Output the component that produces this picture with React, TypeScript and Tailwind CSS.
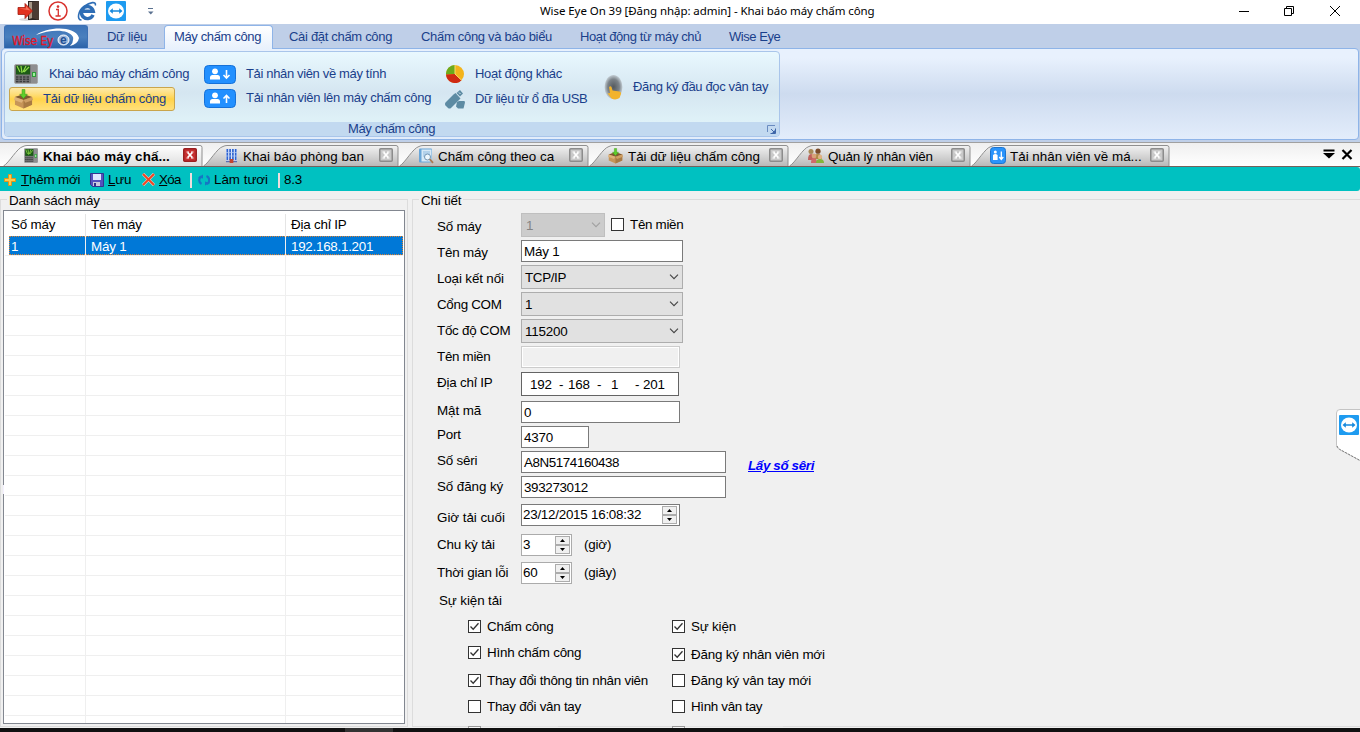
import React from 'react';

type IconProps = { className?: string };

const DoorIcon = () => (
  <svg width="24" height="22" viewBox="0 0 24 22">
    <ellipse cx="9" cy="19.500" rx="7" ry="1.500" fill="#dddddd" />
    <path d="M11 1h11v19H11z" fill="#2a2422" />
    <path d="M12 2h7v15l-7 2z" fill="#a59686" />
    <path d="M15 2l7-1v19l-7-2z" fill="#4a3b33" />
    <path d="M1 7.500h7V3.500l7.500 7.500L8 18.500v-4H1z" fill="#e2311d" stroke="#a51d10" strokeWidth=".8" />
    <path d="M2 8.500h7V6l4.500 4.500z" fill="#f4735c" />
  </svg>
);

const InfoIcon = () => (
  <svg width="20" height="20" viewBox="0 0 20 20">
    <circle cx="10" cy="10" r="9" fill="#fff" stroke="#d8332f" strokeWidth="1.500" />
    <circle cx="10" cy="5.600" r="1.300" fill="#d8332f" />
    <path d="M8 8.500h2.300v6M7.500 15h5.200" fill="none" stroke="#d8332f" strokeWidth="1.300" />
  </svg>
);

const ExplorerIcon = () => (
  <svg width="20" height="20" viewBox="0 0 20 20">
    <path
      d="M16 13.800a6 6 0 1 1 .300-3.500H6"
      fill="none"
      stroke="#2e6db5"
      strokeWidth="3.400"
    />
    <path d="M4.500 19C-.5 19 1 10 7 5.500 13 1 19.500 0 18.300 4.500" fill="none" stroke="#2e6db5" strokeWidth="1.600" />
  </svg>
);

const ViewerIcon = ({ className }: IconProps) => (
  <svg className={className} viewBox="0 0 20 20">
    <rect width="20" height="20" rx="1" fill="#1e9bf0" />
    <ellipse cx="10" cy="10" rx="8" ry="7.500" fill="#fff" />
    <path d="M3.500 10l3.300-2.800v2h6.400v-2l3.300 2.800-3.300 2.800v-2H6.800v2z" fill="#1689dd" />
  </svg>
);

const Logo = () => (
  <div className="relative mt-px ml-1 flex h-[23px] w-[84px] rounded-t-[3px] border border-b-0 border-[#3c70b4] bg-linear-to-b from-[#3d74b8] via-[#4a80be] to-[#2b62a8]">
    <svg className="absolute top-[2px] left-[28px]" width="50" height="19" viewBox="0 0 50 19">
      <path d="M3 7C14-1 42-3 46 10q-1 6-9 8 4-4 3-9C36 1 18 1 3 7z" fill="#fff" />
      <ellipse cx="30.500" cy="12" rx="5.500" ry="5" fill="#9fb9dc" stroke="#fff" strokeWidth="1" />
    </svg>
    <span className="relative mt-[8px] ml-[7px] w-[48px] font-['DejaVu_Sans_Condensed','DejaVu_Sans'] text-[12px] leading-[14px] tracking-[-0.15px] whitespace-pre text-[#e0182a] [-webkit-text-stroke:0.3px_#e0182a]">
      Wise Ey
    </span>
    <span className="relative mt-[7px] text-[12px] leading-[14px] font-bold text-[#1f4f94]">e</span>
  </div>
);

const DeviceIcon = ({ className }: IconProps) => (
  <svg className={className} viewBox="0 0 24 20" preserveAspectRatio="none">
    <rect x=".5" y=".5" width="23" height="19" rx="1.500" fill="#77787a" stroke="#a8a9aa" />
    <rect x="2" y="1.500" width="14" height="9" fill="#1d5a17" />
    <path d="M3 2l3 6M7 2l1 7M12 2l-3 6M15 3l-5 5" stroke="#8edb48" strokeWidth="1.200" />
    <path d="M2 13h13M2 15.300h13M2 17.600h13" stroke="#3c3d3f" strokeWidth="1.500" strokeDasharray="2.500 1" />
    <rect x="17" y="1" width="6" height="18" fill="#8d8e90" />
    <rect x="18" y="8" width="4" height="5" fill="#2f9c3a" />
    <rect x="19" y="9" width="2" height="3" fill="#9cf09a" />
  </svg>
);

const BoxIcon = ({ className }: IconProps) => (
  <svg className={className} viewBox="0 0 20 20">
    <path d="M1 8l9-3 9 3v8l-9 4-9-4z" fill="#c69558" />
    <path d="M10 11l9-3v8l-9 4z" fill="#a87a43" />
    <path d="M1 8l9 3 9-3-9-3z" fill="#7e5a30" />
    <path d="M1 8l9 3-2 3-8-3z" fill="#ddb27a" />
    <path d="M19 8l-9 3 2 3 8-3z" fill="#cf9f63" />
    <path d="M8.500 0h3v5h2.500L10 9.500 6 5h2.500z" fill="#5fd02c" stroke="#3c9c18" strokeWidth=".6" />
  </svg>
);

const PersonArrow = ({ up }: { up?: boolean }) => (
  <svg width="32" height="19" viewBox="0 0 32 19">
    <rect x=".5" y=".5" width="31" height="18" rx="4" fill="#2290ff" stroke="#1671d8" />
    <circle cx="11" cy="6.300" r="2.900" fill="#fff" />
    <path d="M6 14.500v-2q0-2.500 2.500-2.500h5q2.500 0 2.500 2.500v2z" fill="#fff" />
    <path
      d={up ? 'M22.500 14V7M19.500 9.500l3-3 3 3' : 'M22.500 5v7.500M19.500 10l3 3 3-3'}
      fill="none"
      stroke="#fff"
      strokeWidth="1.600"
    />
  </svg>
);

const PieIcon = () => (
  <svg width="18" height="18" viewBox="0 0 18 18">
    <circle cx="9" cy="9" r="9" fill="#f3b41b" />
    <path d="M9 9V0A9 9 0 0 0 0 9.500z" fill="#6bab1c" />
    <path d="M9 9L0 9.500A9 9 0 0 0 15.500 15.200z" fill="#cf2a13" />
    <path d="M9 0v9l6.500 6.200" fill="none" stroke="#f9dc6d" />
  </svg>
);

const UsbIcon = () => (
  <svg width="20" height="19" viewBox="0 0 20 19">
    <g fill="#5d8ba3">
      <path d="M11.500 3l3.500-3 3 3.500L15 6.500z" />
      <path d="M8.500 4.500l2-1.500 5 5.500-9.500 9.500q-1.500 1-3 0l-2.500-2.500q-1-1.500 0-3z" />
      <path d="M12 12l2-1h5.500l.5 1.500-1.500 6H13l-2-2z" />
    </g>
    <path d="M14 2.500l1.500 1.500" stroke="#d8eaf2" />
  </svg>
);

const FingerIcon = () => (
  <svg width="19" height="25" viewBox="0 0 19 25">
    <defs>
      <radialGradient id="finger">
        <stop offset="0" stopColor="#54595e" />
        <stop offset=".65" stopColor="#7c8389" />
        <stop offset="1" stopColor="#c3cdd4" />
      </radialGradient>
    </defs>
    <ellipse cx="9.500" cy="12" rx="9" ry="12" fill="url(#finger)" />
    <path d="M5 12q1.500-1.500 2.500 0l1 3.500 7 1q2 .5 1.500 2.500l-1.500 4q-4 2.500-8 .5L3.500 18.500l2.500-.5z" fill="#f2b32b" />
  </svg>
);

const BuildingIcon = () => (
  <svg width="13" height="14" viewBox="0 0 14 14" preserveAspectRatio="none">
    <rect x="1" width="12" height="13" fill="#dfe9fb" />
    <path d="M2.500 0v11M5.500 0v11M8.500 0v11M11.500 0v11" stroke="#2d62cf" strokeWidth="1.800" />
    <path d="M1 3.500h12M1 7h12" stroke="#b9cdf3" strokeWidth=".7" />
    <path d="M1 12.500h12" stroke="#5a6fae" strokeWidth="1.500" />
    <rect x="5" y="10" width="4" height="4" fill="#c2452f" />
  </svg>
);

const BookIcon = () => (
  <svg width="16" height="16" viewBox="0 0 16 16">
    <rect x="1" y=".5" width="13" height="14" rx="1" fill="#6aa6d8" />
    <rect x="3.500" y="1.500" width="10" height="12" fill="#d8e9f6" />
    <path d="M5 4h7M5 6h7M5 8h4" stroke="#8fbbe0" />
    <circle cx="9.500" cy="9" r="3" fill="#eef7fd" stroke="#7295b3" />
    <path d="M11.700 11.200l3.300 3.600" stroke="#ab7a50" strokeWidth="1.800" />
  </svg>
);

const PeopleIcon = () => (
  <svg width="17" height="15" viewBox="0 0 17 15">
    <circle cx="4" cy="3.500" r="2.500" fill="#a88a58" />
    <circle cx="11" cy="3.200" r="2.600" fill="#7a4c2b" />
    <path d="M1 12q0-6 3-6t4 6z" fill="#c0605c" />
    <path d="M7 11q0-5 4-5t4 5z" fill="#b08945" />
    <circle cx="7" cy="8" r="2.400" fill="#d8a27a" />
    <path d="M4 15q0-5 3-5t3 5z" fill="#cf6a6a" />
    <circle cx="13" cy="9" r="2.200" fill="#e0b284" />
    <path d="M9 15q0-4 4-4t4 4z" fill="#83b53a" />
  </svg>
);

const TransferIcon = () => (
  <svg width="16" height="17" viewBox="0 0 16 17">
    <rect x=".5" y=".5" width="15" height="16" rx="3" fill="#2a94fb" stroke="#1c74cf" />
    <circle cx="5.300" cy="5" r="1.500" fill="#fff" />
    <path d="M3 13V8q2.300-2 4.600 0v5z" fill="#fff" />
    <path d="M11.300 4.500v7M9.300 10l2 2.500 2-2.500" stroke="#fff" strokeWidth="1.300" fill="none" />
  </svg>
);

const Chevron = ({ className }: IconProps) => (
  <svg className={className} width="10" height="6" viewBox="0 0 10 6">
    <path d="M1 .7l4 4 4-4" fill="none" stroke="currentColor" strokeWidth="1.100" />
  </svg>
);

const CloseBox = ({ active }: { active?: boolean }) => (
  <svg width="14" height="14" viewBox="0 0 14 14">
    <rect
      x=".75"
      y=".75"
      width="12.500"
      height="12.500"
      rx="1"
      fill={active ? '#c62f2f' : '#c9c9c9'}
      stroke={active ? '#9b2020' : '#8c8c8c'}
      strokeWidth="1.500"
    />
    <path d="M4.700 4.500l4.600 5M9.300 4.500l-4.600 5" stroke="#fff" strokeWidth="1.800" />
    <path d="M3.500 4h2.500M8 4h2.500M3.500 10h2.500M8 10h2.500" stroke="#fff" />
  </svg>
);

const menus = [
  { text: 'Dữ liệu', box: 'w-[76px] pl-[19px] tracking-[-0.27px]' },
  { text: 'Máy chấm công', box: 'w-[109px] pl-[9px] tracking-[-0.36px]', active: true },
  { text: 'Cài đặt chấm công', box: 'w-[132px] pl-[16px] tracking-[-0.31px]' },
  { text: 'Chấm công và báo biểu', box: 'w-[159px] pl-[16px] tracking-[-0.3px]' },
  { text: 'Hoạt động từ máy chủ', box: 'w-[149px] pl-[16px] tracking-[-0.38px]' },
  { text: 'Wise Eye', box: 'w-[90px] pl-[16px] tracking-[-0.45px]' },
];

const tabs = [
  { text: 'Khai báo máy chấ...', icon: <DeviceIcon className="h-[15px] w-[14px]" />, width: 200, box: 'w-[200px] ml-[3px] pl-[21px]', slot: 'w-[19px]', label: 'font-bold tracking-[0.1px] -mt-[3px]', active: true },
  { text: 'Khai báo phòng ban', icon: <BuildingIcon />, width: 196, box: 'w-[196px] pl-[22px]', slot: 'w-[18px]', label: 'tracking-[0.07px]' },
  { text: 'Chấm công theo ca', icon: <BookIcon />, width: 190, box: 'w-[190px] pl-[19px]', slot: 'w-[20px]', label: 'tracking-[0px]' },
  { text: 'Tải dữ liệu chấm công', icon: <BoxIcon className="h-[16px] w-[15px]" />, width: 200, box: 'w-[200px] pl-[19px]', slot: 'w-[20px]', label: 'tracking-[-0.03px]' },
  { text: 'Quản lý nhân viên', icon: <PeopleIcon />, width: 182, box: 'w-[182px] pl-[18px]', slot: 'w-[21px]', label: 'tracking-[-0.18px]' },
  { text: 'Tải nhân viên về má...', icon: <TransferIcon />, width: 199, box: 'w-[199px] pl-[19px]', slot: 'w-[20px]', label: 'tracking-[0px] -mt-[3px]' },
];

const Tab = ({ tab }: { tab: (typeof tabs)[number] }) => {
  const w = tab.width;
  return (
    <div className={`relative flex h-[21px] shrink-0 items-center ${tab.box}`}>
      <svg className="absolute top-0 left-0" width={w} height="21" viewBox={`0 0 ${w} 21`}>
        <path
          d={`M.5 21C6 18 14 3 20 1.500Q22 .5 24 .5H${w - 3}q2 0 2 2V21`}
          fill={tab.active ? 'url(#tabOn)' : 'url(#tabOff)'}
          stroke="#8f8f8f"
        />
      </svg>
      <span className={`relative flex shrink-0 ${tab.slot}`}>{tab.icon}</span>
      <span className={`relative mt-[3px] grow leading-[16px] whitespace-nowrap ${tab.label}`}>{tab.text}</span>
      <span className="relative mr-[6px] -mt-px">
        <CloseBox active={tab.active} />
      </span>
    </div>
  );
};

const Titlebar = () => (
  <div className="flex h-6 shrink-0 items-start bg-white">
    <div className="flex h-[22px] w-[540px] items-center">
      <span className="ml-[17px] w-[31px]"><DoorIcon /></span>
      <span className="w-[29px]"><InfoIcon /></span>
      <span className="w-[29px]"><ExplorerIcon /></span>
      <span className="w-[42px]"><ViewerIcon className="h-5 w-5" /></span>
      <svg width="6" height="7" viewBox="0 0 6 7">
        <path d="M0 .5h5" stroke="#5a7190" />
        <path d="M0 3.500h5.500L2.800 6.500z" fill="#5a7190" />
      </svg>
    </div>
    <div className="mt-[3px] w-[699px] font-['Noto_Sans'] text-[11.5px] leading-[16px] tracking-[-0.07px] whitespace-nowrap text-black">
      Wise Eye On 39 [Đăng nhập: admin] - Khai báo máy chấm công
    </div>
    <svg className="mt-[5px]" width="104" height="12" viewBox="0 0 104 12">
      <g fill="none" stroke="#000">
        <path d="M0 6.500h10" />
        <path d="M45.500 3.500h7v7h-7zM47.500 3.500v-2h7v7h-2" />
        <path d="M91 1l10 10M101 1L91 11" />
      </g>
    </svg>
  </div>
);

const RibbonItem = ({ icon, slot, text, box }: { icon: React.ReactNode; slot: string; text: string; box: string }) => (
  <div className={`flex items-center whitespace-nowrap ${box}`}>
    <span className={`flex shrink-0 ${slot}`}>{icon}</span>
    {text}
  </div>
);

const Ribbon = () => (
  <div className="h-[118px] shrink-0 bg-[#bfcfe8] text-[13px] leading-[16px] text-[#1a3f8b]">
    <div className="flex h-6">
      <Logo />
      {menus.map((m) => (
        <div
          key={m.text}
          className={`relative flex shrink-0 items-center whitespace-nowrap ${m.box} ${
            m.active
              ? 'z-10 mt-px h-6 rounded-t-[4px] border border-b-0 border-[#8eb4e8] bg-linear-to-b from-white to-[#e8f1fc] pb-[2px]'
              : 'h-[25px]'
          }`}
        >
          {m.text}
        </div>
      ))}
    </div>
    <div className="mr-px ml-px h-[92px] rounded-[4px] border border-[#8eb4e8] bg-linear-to-b from-[#e8f1fd] from-10% via-[#cddbef] via-50% to-[#e3edfb] pt-[2px] pl-[2px]">
      <div className="flex h-[86px] w-[776px] flex-col overflow-hidden rounded-[4px] border border-[#a9c5ea] bg-linear-to-b from-[#e9f8fe] via-[#d5e6f1] via-48% to-[#e4f7fb]">
        <div className="flex h-[70px]">
          <div className="w-[199px] pt-[9px] pl-[4px]">
            <RibbonItem icon={<DeviceIcon className="h-5 w-6" />} slot="w-[35px]" text="Khai báo máy chấm công" box="h-[26px] pl-[5px] pb-px tracking-[-0.3px]" />
            <RibbonItem
              icon={<BoxIcon className="h-[20px] w-[19px]" />}
              slot="w-[29px]"
              text="Tải dữ liệu chấm công"
              box="h-[24px] w-[166px] rounded-[3px] border border-[#c9a54c] bg-linear-to-b from-[#fdeaa9] via-[#ffd348] via-50% to-[#ffe07a] pl-[4px] tracking-[-0.27px]"
            />
          </div>
          <div className="w-[241px] pt-[10px]">
            <RibbonItem icon={<PersonArrow />} slot="w-[42px]" text="Tải nhân viên về máy tính" box="h-6 tracking-[-0.35px]" />
            <RibbonItem icon={<PersonArrow up />} slot="w-[42px]" text="Tải nhân viên lên máy chấm công" box="h-6 tracking-[-0.3px]" />
          </div>
          <div className="w-[159px] pt-[10px]">
            <RibbonItem icon={<PieIcon />} slot="w-[30px] pl-px" text="Hoạt động khác" box="h-6 tracking-[-0.29px]" />
            <RibbonItem icon={<UsbIcon />} slot="w-[30px]" text="Dữ liệu từ ổ đĩa USB" box="h-[26px] tracking-[-0.43px]" />
          </div>
          <div className="pt-[23px]">
            <RibbonItem icon={<FingerIcon />} slot="w-[29px]" text="Đăng ký đầu đọc vân tay" box="h-6 tracking-[-0.35px]" />
          </div>
        </div>
        <div className="flex h-[14px] items-center bg-[#c2d9f0]">
          <span className="grow pl-[11px] text-center tracking-[-0.36px]">Máy chấm công</span>
          <svg className="mt-px mr-[2px]" width="10" height="9" viewBox="0 0 10 9">
            <path d="M.5 7V.5H8" fill="none" stroke="#6a8cc0" />
            <path d="M4 4l3 3M8.500 3.500v5h-5" fill="none" stroke="#3f66a8" />
            <path d="M5 8h3V5z" fill="#3f66a8" />
          </svg>
        </div>
      </div>
    </div>
  </div>
);

const TabStrip = () => (
  <div className="flex h-[25px] shrink-0 items-end border-t border-b border-t-[#a0a0a0] border-b-[#75625c] bg-linear-to-b from-[#efefef] to-white text-[13.4px] text-black">
    <svg className="absolute" width="0" height="0">
      <defs>
        <linearGradient id="tabOn" x2="0" y2="1">
          <stop offset="0" stopColor="#fff" />
          <stop offset="1" stopColor="#dedede" />
        </linearGradient>
        <linearGradient id="tabOff" x2="0" y2="1">
          <stop offset="0" stopColor="#f2f2f2" />
          <stop offset="1" stopColor="#b9b9b9" />
        </linearGradient>
      </defs>
    </svg>
    {tabs.map((t) => (
      <Tab key={t.text} tab={t} />
    ))}
    <svg className="mr-[7px] mb-[6px] ml-auto" width="30" height="11" viewBox="0 0 30 11">
      <path d="M.5 1.500h11" stroke="#000" strokeWidth="2" />
      <path d="M0 4h12L6 9.500z" fill="#000" />
      <path d="M19.500 1l9 9M28.500 1l-9 9" stroke="#000" strokeWidth="2.200" />
    </svg>
  </div>
);

const Toolbar = () => (
  <div className="flex h-6 shrink-0 items-center rounded-r-[3px] bg-[#00c1c1] pt-px pl-[4px] text-[13.4px] leading-[16px] tracking-[-0.18px] whitespace-nowrap text-black">
    <svg className="mr-[5px]" width="12" height="12" viewBox="0 0 12 12">
      <path d="M4.500.5h3v4h4v3h-4v4h-3v-4h-4v-3h4z" fill="#ffcb4d" stroke="#e0941c" />
    </svg>
    <span className="w-[69px]"><u>T</u>hêm mới</span>
    <svg className="mr-[4px]" width="14" height="14" viewBox="0 0 14 14">
      <path d="M.5.5h13v13h-11l-2-2z" fill="#5552bd" stroke="#35338f" />
      <path d="M3 1h8v6H3z" fill="#dfe6ff" />
      <path d="M3 9h7v4H3z" fill="#c9c9dd" />
      <path d="M4 10h2v3H4z" fill="#33318c" />
    </svg>
    <span className="w-[34px]"><u>L</u>ưu</span>
    <svg className="mr-[4px]" width="13" height="13" viewBox="0 0 13 13">
      <path d="M1 1l11 11M12 1L1 12" stroke="#ffd9cc" strokeWidth="3" />
      <path d="M1 1l11 11M12 1L1 12" stroke="#ef4423" strokeWidth="2" />
    </svg>
    <span className="w-[31px] tracking-[-0.7px]"><u>X</u>óa</span>
    <span className="mt-px mr-[6px] h-[15px] w-[2px] bg-[#eedede]" />
    <svg className="mr-[4px]" width="12" height="12" viewBox="0 0 12 12">
      <path d="M3 2.500A4.500 4.500 0 0 0 3.500 10M9 10A4.500 4.500 0 0 0 8.500 2" fill="none" stroke="#1676c4" strokeWidth="2.200" />
      <path d="M0 3.500l5-3v4zM12 9L7 11.500v-4z" fill="#1676c4" />
    </svg>
    <span className="w-[64px] tracking-[-0.02px]">Làm tươi</span>
    <span className="mt-px mr-[4px] h-[15px] w-[2px] bg-[#eedede]" />
    <span>8.3</span>
  </div>
);

const emptyRows = Array.from({ length: 23 }, (_, i) => i);

const MachineList = () => (
  <fieldset className="relative h-[536px] w-[408px] shrink-0 border border-[#dcdcdc]">
    <legend className="ml-[6px] h-[17px] px-[2px] leading-[19px]">Danh sách máy</legend>
    <div className="mt-[2px] ml-[2px] flex h-[514px] w-[402px] flex-col overflow-hidden border border-[#828790] bg-white px-px">
      <div className="flex h-[25px] shrink-0 pt-[3px]">
        <span className="h-full w-[81px] border-r border-[#e5e5e5] pl-[6px] leading-[21px]">Số máy</span>
        <span className="h-full w-[200px] border-r border-[#e5e5e5] pl-[5px] leading-[21px]">Tên máy</span>
        <span className="h-full pl-[5px] leading-[21px]">Địa chỉ IP</span>
      </div>
      <div className="flex h-[20px] shrink-0 border-b border-[#efefef] pl-[4px] text-white">
        <div className="flex h-[19px] w-[394px] bg-[#0078d7] leading-[21px] outline-1 -outline-offset-1 outline-[#d98235] outline-dotted">
          <span className="w-[77px] border-r border-[#efefef] pl-[2px]">1</span>
          <span className="w-[200px] border-r border-[#efefef] pl-[5px]">Máy 1</span>
          <span className="pl-[5px] tracking-[-0.27px]">192.168.1.201</span>
        </div>
      </div>
      {emptyRows.map((i) => (
        <div key={i} className="flex h-[20px] shrink-0 border-b border-[#efefef]">
          <span className="w-[81px] border-r border-[#efefef]" />
          <span className="w-[200px] border-r border-[#efefef]" />
        </div>
      ))}
      <div className="flex h-[8px] shrink-0">
        <span className="w-[81px] border-r border-[#efefef]" />
        <span className="w-[200px] border-r border-[#efefef]" />
      </div>
    </div>
    <span className="absolute top-[277px] left-[2px] h-[9px] w-px bg-[#f4f0ff]" />
  </fieldset>
);

const labels = [
  { text: 'Số máy', box: 'h-[26px]' },
  { text: 'Tên máy', box: 'h-[26px]' },
  { text: 'Loại kết nối', box: 'h-[26px] tracking-[-0.14px]' },
  { text: 'Cổng COM', box: 'h-[26px] tracking-[-0.3px]' },
  { text: 'Tốc độ COM', box: 'h-[26px] tracking-[-0.26px]' },
  { text: 'Tên miền', box: 'h-[26px] tracking-[-0.3px]' },
  { text: 'Địa chỉ IP', box: 'h-[28px]' },
  { text: 'Mật mã', box: 'h-[24px] tracking-[-0.08px]' },
  { text: 'Port', box: 'h-[26px]' },
  { text: 'Số sêri', box: 'h-[26px]' },
  { text: 'Số đăng ký', box: 'h-[31px] tracking-[-0.08px]' },
  { text: 'Giờ tải cuối', box: 'h-[27px] tracking-[-0.04px]' },
  { text: 'Chu kỳ tải', box: 'h-[28px]' },
  { text: 'Thời gian lỗi', box: 'h-[20px]' },
];

const TextBox = ({ value, box }: { value: string; box: string }) => (
  <div className={`h-[22px] border border-[#7a7a7a] bg-white pl-[2px] leading-[21px] ${box}`}>{value}</div>
);

const Combo = ({ value, box }: { value: string; box: string }) => (
  <div className={`flex h-[24px] w-[162px] items-center justify-between border border-[#adadad] bg-[#e1e1e1] pr-[3px] pl-[3px] ${box}`}>
    <span className="mt-px">{value}</span>
    <Chevron className="text-[#444]" />
  </div>
);

const Spinner = ({ className }: IconProps) => (
  <div className={`flex flex-col ${className ?? ''}`}>
    <span className="flex h-[9px] w-[15px] items-center justify-center border border-[#acacac] bg-[#f0f0f0]">
      <svg width="5" height="3" viewBox="0 0 5 3"><path d="M0 3L2.500 0 5 3z" fill="#000" /></svg>
    </span>
    <span className="flex h-[9px] w-[15px] items-center justify-center border border-[#acacac] bg-[#f0f0f0]">
      <svg width="5" height="3" viewBox="0 0 5 3"><path d="M0 0h5L2.500 3z" fill="#000" /></svg>
    </span>
  </div>
);

const NumberBox = ({ value, unit, box }: { value: string; unit: string; box: string }) => (
  <div className={`flex h-[22px] ${box}`}>
    <div className="flex w-[51px] items-center justify-between border border-[#ababab] bg-white pr-px pl-px">
      <span className="-mt-px">{value}</span>
      <Spinner />
    </div>
    <span className="ml-[12px] leading-[21px]">{unit}</span>
  </div>
);

const CheckBox = ({ text, checked, box }: { text?: string; checked?: boolean; box: string }) => (
  <div className={`flex items-start leading-[18px] whitespace-nowrap ${box}`}>
    <svg className="mt-[2px] mr-[6px] shrink-0" width="13" height="13" viewBox="0 0 13 13">
      <rect x=".5" y=".5" width="12" height="12" fill="#fff" stroke="#333" />
      {checked && <path d="M2.500 6.500l2.700 2.800 5.300-6" fill="none" stroke="#333" strokeWidth="1.300" />}
    </svg>
    {text}
  </div>
);

const Details = () => (
  <fieldset className="ml-[4px] h-[536px] min-w-0 grow border border-r-0 border-[#dcdcdc]">
    <legend className="ml-[6px] h-[17px] px-[2px] leading-[19px]">Chi tiết</legend>
    <div className="flex h-[382px] pl-[24px]">
      <div className="w-[84px] shrink-0 pt-[8px] leading-[21px] whitespace-nowrap">
        {labels.map((l, i) => (
          <div key={i} className={l.box}>{l.text}</div>
        ))}
      </div>
      <div className="w-[206px] shrink-0 pt-[5px]">
        <div className="flex">
          <div className="flex h-[24px] w-[84px] items-center justify-between border border-[#bfbfbf] bg-[#cccccc] pr-[3px] pl-[4px] text-[#838383]">
            <span className="mt-px">1</span>
            <Chevron className="text-[#a0a0a0]" />
          </div>
          <CheckBox text="Tên miền" box="ml-[6px] pt-[3px] tracking-[-0.3px]" />
        </div>
        <TextBox value="Máy 1" box="mt-[3px] w-[162px]" />
        <Combo value="TCP/IP" box="mt-[3px] tracking-[-0.35px]" />
        <Combo value="1" box="mt-[3px]" />
        <Combo value="115200" box="mt-[3px]" />
        <div className="mt-[3px] h-[22px] w-[159px] border border-[#cccccc] bg-[#f0f0f0] shadow-[inset_0_0_0_1px_#fff]" />
        <div className="mt-[4px] flex h-[24px] w-[158px] border border-[#646464] bg-white pl-[8px] leading-[23px]">
          <span className="w-[29px]">192</span>
          <span className="w-[9px]">-</span>
          <span className="w-[29px]">168</span>
          <span className="w-[14px]">-</span>
          <span className="w-[24px]">1</span>
          <span className="w-[8px]">-</span>
          <span>201</span>
        </div>
        <TextBox value="0" box="mt-[5px] w-[159px]" />
        <TextBox value="4370" box="mt-[3px] w-[68px]" />
        <TextBox value="A8N5174160438" box="mt-[3px] w-[205px] tracking-[-0.42px]" />
        <TextBox value="393273012" box="mt-[3px] w-[205px] tracking-[-0.35px]" />
        <div className="mt-[6px] flex h-[22px] w-[159px] items-center justify-between border border-[#7a7a7a] bg-white pr-[2px] pl-px">
          <span className="tracking-[-0.25px]">23/12/2015 16:08:32</span>
          <Spinner />
        </div>
        <NumberBox value="3" unit="(giờ)" box="mt-[8px]" />
        <NumberBox value="60" unit="(giây)" box="mt-[6px]" />
      </div>
      <a className="mt-[249px] ml-[21px] h-[16px] leading-[17px] font-bold tracking-[-0.36px] whitespace-nowrap text-[#0000ff] italic underline">
        Lấy số sêri
      </a>
    </div>
    <div className="h-[28px] pl-[26px] leading-[21px] tracking-[-0.1px]">Sự kiện tải</div>
    <div className="flex h-[109px] pl-[55px]">
      <div className="w-[204px]">
        <CheckBox checked text="Chấm công" box="h-[26px] tracking-[-0.23px]" />
        <CheckBox checked text="Hình chấm công" box="h-[28px] tracking-[-0.23px]" />
        <CheckBox checked text="Thay đổi thông tin nhân viên" box="h-[26px] tracking-[-0.26px]" />
        <CheckBox text="Thay đổi vân tay" box="h-[26px] tracking-[-0.27px]" />
        <div className="h-[4px] w-[90px] overflow-hidden bg-[#f0f0f0] opacity-40">
          <CheckBox box="" />
        </div>
      </div>
      <div className="w-[204px]">
        <CheckBox checked text="Sự kiện" box="h-[28px]" />
        <CheckBox checked text="Đăng ký nhân viên mới" box="h-[26px]" />
        <CheckBox text="Đăng ký vân tay mới" box="h-[26px] tracking-[-0.14px]" />
        <CheckBox text="Hình vân tay" box="h-[26px] tracking-[-0.34px]" />
        <div className="h-[4px] w-[111px] overflow-hidden bg-[#f0f0f0] opacity-40">
          <CheckBox box="" />
        </div>
      </div>
    </div>
  </fieldset>
);

export default function App() {
  return (
    <div className="relative flex h-[732px] w-[1360px] flex-col overflow-hidden bg-[#f0f0f0] font-['Liberation_Sans',Arial,sans-serif]">
      <Titlebar />
      <Ribbon />
      <TabStrip />
      <Toolbar />
      <div className="flex h-[537px] shrink-0 text-[13.4px] leading-[16px] tracking-[-0.18px] text-black">
        <MachineList />
        <Details />
      </div>
      <div className="h-[4px] bg-[#101010]">
        <div className="ml-[345px] h-full w-[48px] bg-[#333]" />
      </div>
      <div className="absolute top-[409px] right-0 h-[53px] w-[24px]">
        <svg className="absolute top-0 left-0" width="24" height="53" viewBox="0 0 24 53">
          <path d="M24 .5H4Q.5.500.5 4v32q0 3 3 4.500L24 51.500" fill="#fff" stroke="#c4c4c4" />
          <path d="M1 37q1 2.500 3 3.500L24 51.500" fill="none" stroke="#777" strokeDasharray="2 1.500" />
        </svg>
        <ViewerIcon className="absolute top-[6px] left-[3px] h-5 w-5" />
      </div>
    </div>
  );
}
